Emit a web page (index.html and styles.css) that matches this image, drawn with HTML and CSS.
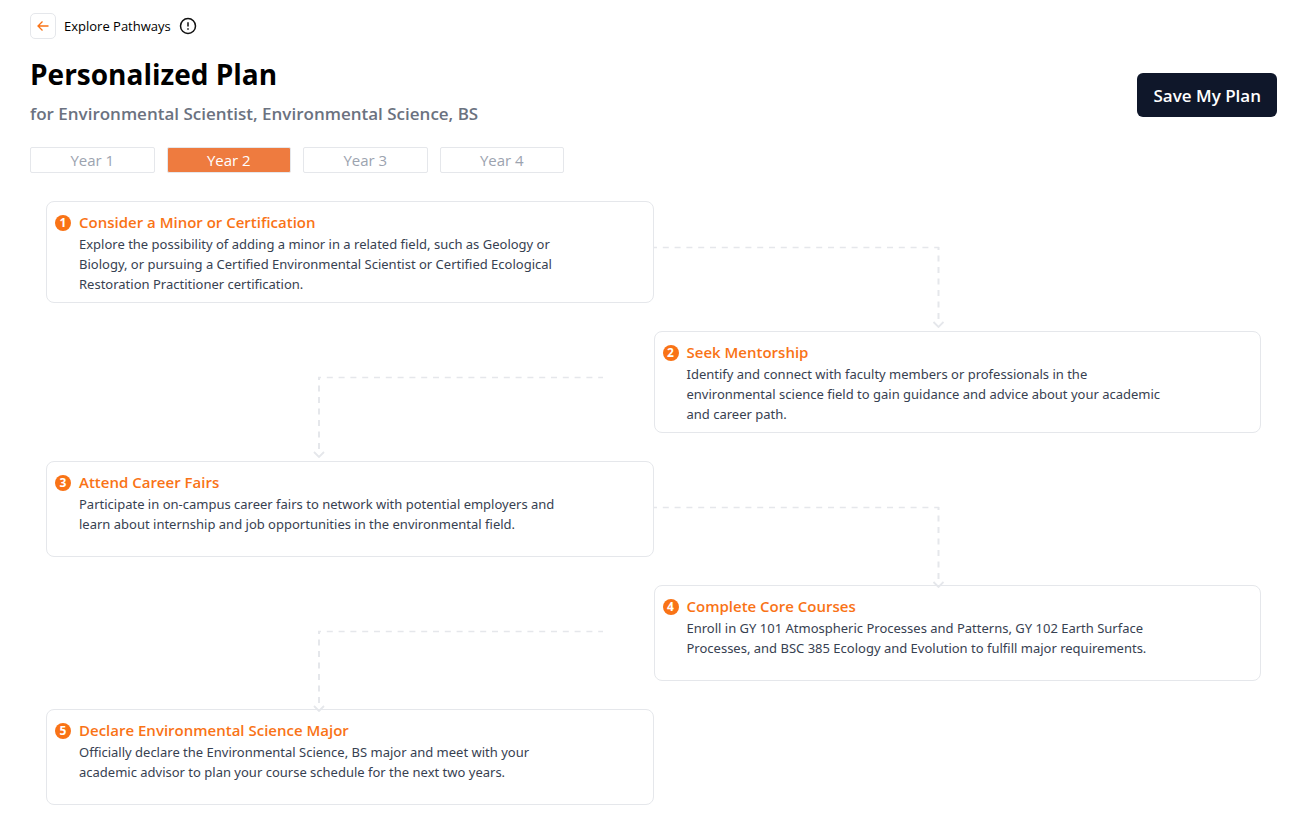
FILE: index.html
```
<!DOCTYPE html>
<html lang="en">
<head>
    <meta charset="UTF-8">
    <meta name="viewport" content="width=device-width, initial-scale=1.0">
    <title>Personalized Plan</title>
    <link rel="stylesheet" href="styles.css">
</head>
<body>

<!-- Shared connector shapes -->
<svg class="sprite" aria-hidden="true">
    <symbol id="arrow-right" viewBox="0 0 290 82">
        <path d="M0 1.500H285" stroke-width="1.300" stroke-dasharray="6 5.800" stroke-dashoffset="3"/>
        <path d="M284.500 1V76" stroke-width="2" stroke-dasharray="6 5.500" stroke-dashoffset="3"/>
        <path d="M279.500 76L284.500 81L289.500 76" stroke-width="1.800"/>
    </symbol>
    <symbol id="arrow-left" viewBox="0 0 290 82">
        <path d="M5 1.500H290" stroke-width="1.300" stroke-dasharray="6 5.800" stroke-dashoffset="3"/>
        <path d="M6 1V76" stroke-width="2" stroke-dasharray="6 5.500" stroke-dashoffset="3"/>
        <path d="M1 76L6 81L11 76" stroke-width="1.800"/>
    </symbol>
</svg>

<main class="page">
    <nav class="breadcrumb">
        <button class="back-btn" type="button" aria-label="Back">
            <svg width="12" height="12" viewBox="0 0 12 12"><path d="M11.500 6H1M5.500 1.500L1 6L5.500 10.500"/></svg>
        </button>
        <span>Explore Pathways</span>
        <svg class="info-icon" width="18" height="18" viewBox="0 0 18 18">
            <circle cx="9" cy="9" r="7.500"/>
            <path d="M9 5.200V9.500M9 11.300V12.800"/>
        </svg>
    </nav>

    <header class="plan-header">
        <div>
            <h1>Personalized Plan</h1>
            <p class="subtitle">for Environmental Scientist, Environmental Science, BS</p>
        </div>
        <button class="save-btn" type="button">Save My Plan</button>
    </header>

    <div class="years">
        <button class="year" type="button">Year 1</button>
        <button class="year active" type="button">Year 2</button>
        <button class="year" type="button">Year 3</button>
        <button class="year" type="button">Year 4</button>
    </div>

    <section class="steps">
        <div class="step-row">
            <article class="card">
                <span class="number">1</span>
                <div class="card-text">
                    <h2>Consider a Minor or Certification</h2>
                    <p>Explore the possibility of adding a minor in a related field, such as Geology or Biology, or pursuing a Certified Environmental Scientist or Certified Ecological Restoration Practitioner certification.</p>
                </div>
            </article>
            <svg class="connector"><use href="#arrow-right"/></svg>
        </div>

        <div class="step-row">
            <svg class="connector left"><use href="#arrow-left"/></svg>
            <article class="card">
                <span class="number">2</span>
                <div class="card-text">
                    <h2>Seek Mentorship</h2>
                    <p>Identify and connect with faculty members or professionals in the environmental science field to gain guidance and advice about your academic and career path.</p>
                </div>
            </article>
        </div>

        <div class="step-row">
            <article class="card">
                <span class="number">3</span>
                <div class="card-text">
                    <h2>Attend Career Fairs</h2>
                    <p>Participate in on-campus career fairs to network with potential employers and learn about internship and job opportunities in the environmental field.</p>
                </div>
            </article>
            <svg class="connector"><use href="#arrow-right"/></svg>
        </div>

        <div class="step-row">
            <svg class="connector left"><use href="#arrow-left"/></svg>
            <article class="card">
                <span class="number">4</span>
                <div class="card-text">
                    <h2>Complete Core Courses</h2>
                    <p>Enroll in GY 101 Atmospheric Processes and Patterns, GY 102 Earth Surface Processes, and BSC 385 Ecology and Evolution to fulfill major requirements.</p>
                </div>
            </article>
        </div>

        <div class="step-row">
            <article class="card">
                <span class="number">5</span>
                <div class="card-text">
                    <h2>Declare Environmental Science Major</h2>
                    <p>Officially declare the Environmental Science, BS major and meet with your academic advisor to plan your course schedule for the next two years.</p>
                </div>
            </article>
        </div>
    </section>
</main>

</body>
</html>
```
FILE: styles.css
```
* {
    box-sizing: border-box;
}
body {
    margin: 0;
    background: #fff;
    color: #000;
    font-family: "Segoe UI", "Open Sans", "Noto Sans", sans-serif;
}
h1, h2, p {
    margin: 0;
}
button {
    font-family: inherit;
    cursor: pointer;
}
.sprite {
    display: block;
    width: 0;
    height: 0;
}
.page {
    padding: 13px 18px 23px 30px;
}
.breadcrumb {
    display: flex;
    align-items: center;
    gap: 8px;
    font-size: 13px;
    line-height: 20px;
}
.back-btn {
    display: flex;
    align-items: center;
    justify-content: center;
    width: 26px;
    height: 26px;
    padding: 0;
    background: #fff;
    border: 1px solid #e5e7eb;
    border-radius: 5px;
}
.back-btn svg {
    fill: none;
    stroke: #f97316;
    stroke-width: 1.3;
}
.info-icon {
    fill: none;
    stroke: #111;
    stroke-width: 1.5;
}
.plan-header {
    display: flex;
    align-items: center;
    justify-content: space-between;
    margin-top: 15px;
}
h1 {
    font-size: 28px;
    line-height: 40px;
    font-weight: 700;
}
.subtitle {
    margin-top: 6px;
    color: #6b7280;
    font-size: 17px;
    line-height: 28px;
    font-weight: 600;
}
.save-btn {
    height: 44px;
    margin-top: 8px;
    padding: 0 16px;
    background: #0f172a;
    color: #fff;
    border: none;
    border-radius: 6px;
    font-size: 17px;
    font-weight: 600;
}
.years {
    display: grid;
    grid-template-columns: repeat(4, 1fr);
    gap: 12px;
    max-width: 534px;
    margin-top: 19px;
}
.year {
    height: 26px;
    padding: 0;
    background: #fff;
    color: #9ca3af;
    border: 1px solid #e5e7eb;
    border-radius: 2px;
    font-size: 15px;
    line-height: 24px;
}
.year.active {
    background: #ee7b3f;
    color: #fff;
}
.steps {
    display: flex;
    flex-direction: column;
    gap: 28px;
    margin-top: 28px;
    padding: 0 16px;
}
.step-row {
    display: grid;
    grid-template-columns: 1fr 1fr;
}
.card {
    display: flex;
    gap: 8px;
    min-height: 96px;
    padding: 8px;
    border: 1px solid #e5e7eb;
    border-radius: 8px;
}
.number {
    display: flex;
    flex: none;
    align-items: center;
    justify-content: center;
    width: 16px;
    height: 16px;
    margin-top: 5px;
    background: #f97316;
    color: #fff;
    border-radius: 50%;
    font-size: 12px;
    line-height: 16px;
    font-weight: 700;
}
.card-text {
    max-width: 486px;
}
.card h2 {
    color: #f97316;
    font-size: 15px;
    line-height: 24px;
    font-weight: 600;
}
.card p {
    color: #374151;
    font-family: "Segoe UI", "Noto Sans", sans-serif;
    font-size: 13px;
    line-height: 20px;
}
/* runs down past its own row to the next card */
.connector {
    width: 290px;
    height: 82px;
    margin: 45px 0 -82px;
    fill: none;
    stroke: #e5e7eb;
}
.connector.left {
    justify-self: end;
    margin-right: 51px;
}
```
